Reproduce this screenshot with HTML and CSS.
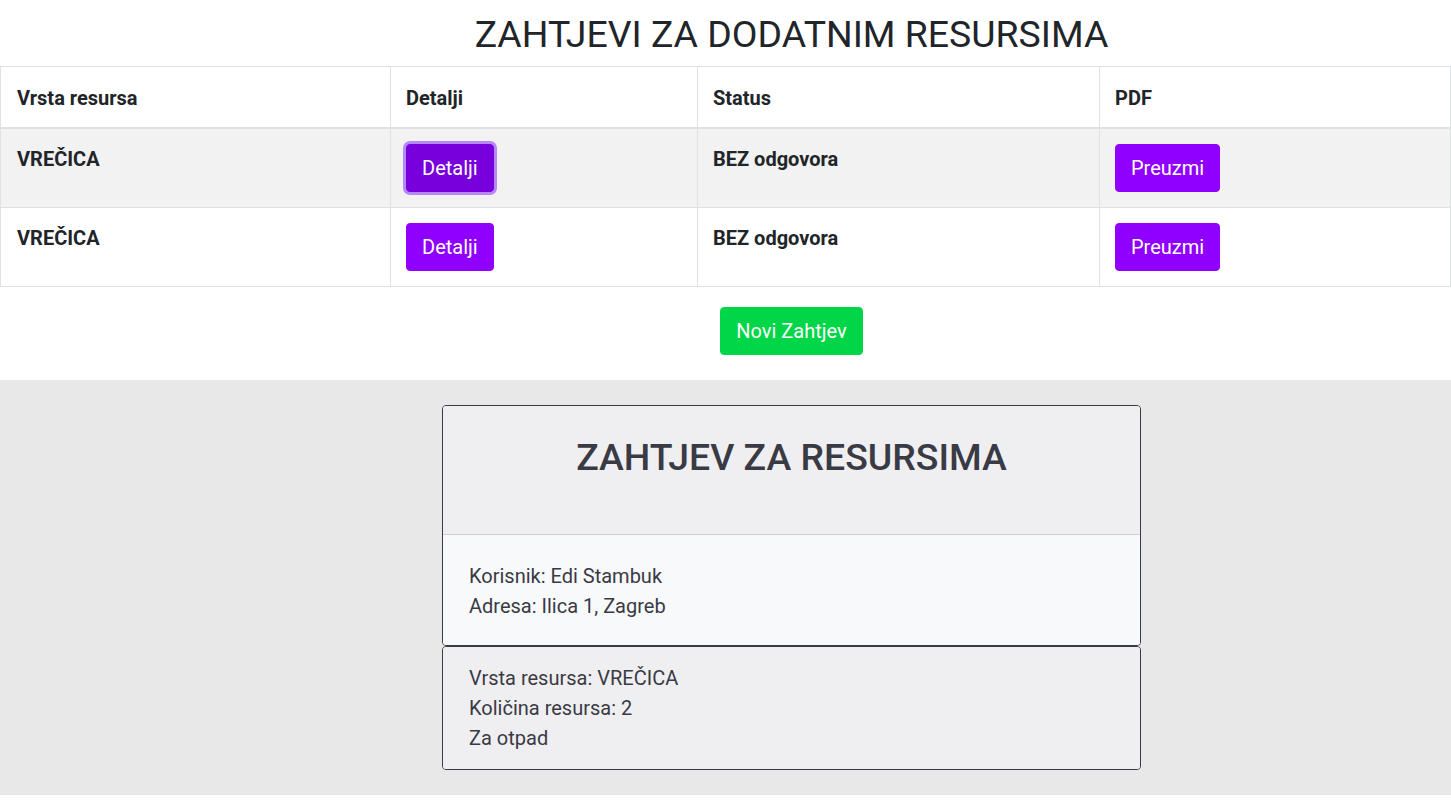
FILE: index.html
```html
<!DOCTYPE html>
<html lang="hr">
<head>
<meta charset="utf-8">
<title>Zahtjevi za dodatnim resursima</title>
<link rel="stylesheet" href="styles.css">
</head>
<body>
<h1 class="page-title">ZAHTJEVI ZA DODATNIM RESURSIMA</h1>
<table class="req-table">
  <colgroup>
    <col class="c1"><col class="c2"><col class="c3"><col class="c4">
  </colgroup>
  <thead>
    <tr><th>Vrsta resursa</th><th>Detalji</th><th>Status</th><th>PDF</th></tr>
  </thead>
  <tbody>
    <tr class="striped">
      <td>VREČICA</td>
      <td><button class="btn btn-purple focused">Detalji</button></td>
      <td>BEZ odgovora</td>
      <td><button class="btn btn-purple">Preuzmi</button></td>
    </tr>
    <tr>
      <td>VREČICA</td>
      <td><button class="btn btn-purple">Detalji</button></td>
      <td>BEZ odgovora</td>
      <td><button class="btn btn-purple">Preuzmi</button></td>
    </tr>
  </tbody>
</table>
<div class="new-row">
  <button class="btn btn-green">Novi Zahtjev</button>
</div>
<section class="detail-area">
  <div class="card-stack">
    <div class="card">
      <div class="card-header"><h2 class="card-title">ZAHTJEV ZA RESURSIMA</h2></div>
      <div class="card-body light">
        <p>Korisnik: Edi Stambuk</p>
        <p>Adresa: Ilica 1, Zagreb</p>
      </div>
    </div>
    <div class="card">
      <div class="card-body grey">
        <p>Vrsta resursa: VREČICA</p>
        <p>Količina resursa: 2</p>
        <p>Za otpad</p>
      </div>
    </div>
  </div>
</section>
</body>
</html>
```
FILE: styles.css
```css
* { box-sizing: border-box; }
html, body { margin: 0; padding: 0; background: #fff; }
body {
  font-family: Roboto, "Liberation Sans", sans-serif;
  color: #212529;
  font-size: 20px;
  line-height: 1.5;
}
.page-title {
  margin: 0;
  padding: 10px 0 8px 132px;
  text-align: center;
  font-size: 37.4px;
  font-weight: 400;
  line-height: 48px;
  color: #212529;
}
.req-table {
  width: 100%;
  border-collapse: collapse;
  table-layout: fixed;
  border: 1px solid #dee2e6;
}
.c1 { width: 390px; }
.c2 { width: 307px; }
.c3 { width: 402px; }
.c4 { width: auto; }
.req-table th, .req-table td {
  border: 1px solid #dee2e6;
  padding: 15px 15px;
  text-align: left;
  vertical-align: top;
  font-size: 20px;
  line-height: 30px;
  font-weight: 700;
  color: #212529;
}
.req-table th { border-bottom-width: 2px; padding: 16px 15px 14px; }
.req-table th:first-child, .req-table td:first-child { padding-left: 16px; }
.req-table tr.striped td { background: #f2f2f2; }
.btn {
  font-family: Roboto, "Liberation Sans", sans-serif;
  font-size: 20px;
  line-height: 30px;
  font-weight: 400;
  padding: 8px 15px;
  border: 1px solid transparent;
  border-radius: 4px;
  color: #fff;
  cursor: pointer;
  display: inline-block;
  vertical-align: top;
}
.btn-purple { background: #9000ff; border-color: #9000ff; }
.btn-purple.focused {
  background: #7700dd;
  border-color: #7700dd;
  box-shadow: 0 0 0 3px #b58af8;
}
.btn-green { background: #00d647; border-color: #00d647; }
.new-row {
  padding: 20px 0 25px 132px;
  text-align: center;
}
.detail-area {
  background: #e8e8e8;
  padding: 25px 0 25px 132px;
  display: flex;
  justify-content: center;
}
.card-stack { width: 699px; }
.card {
  border: 1px solid #3a3a45;
  border-radius: 4px;
  overflow: hidden;
  color: #3a3a45;
}
.card-header {
  background: #efeff1;
  border-bottom: 1px solid #cfd0d3;
  padding: 27px 20px 53px;
  text-align: center;
}
.card-title {
  margin: 0;
  font-size: 37.4px;
  line-height: 48px;
  font-weight: 500;
  color: #3a3a45;
}
.card-body p { margin: 0; font-size: 20px; line-height: 30px; }
.card-body.light { background: #f8f9fa; padding: 26px 26px 24px; }
.card-body.grey { background: #efeff1; padding: 16px 26px 16px; }
```
